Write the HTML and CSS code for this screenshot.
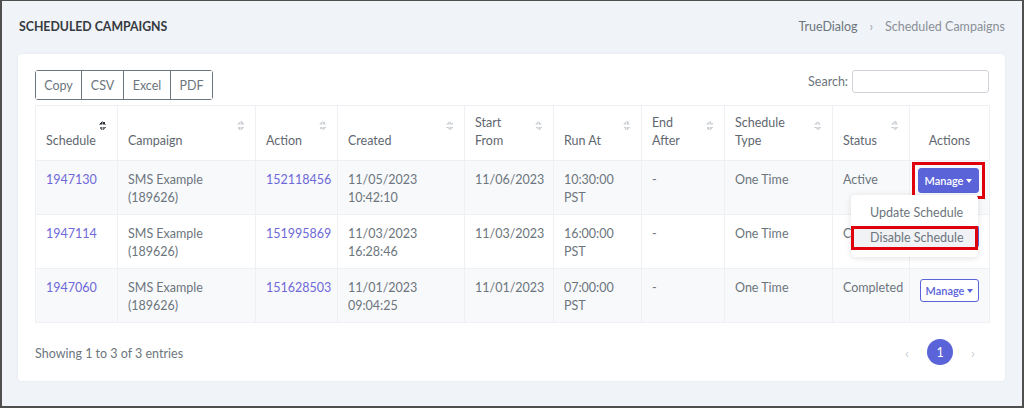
FILE: index.html
```html
<!DOCTYPE html>
<html>
<head>
<meta charset="utf-8">
<link rel="stylesheet" href="styles.css">
</head>
<body>
<div class="frame">
  <div class="page-head">
    <h1 class="title">SCHEDULED CAMPAIGNS</h1>
    <div class="crumbs"><span class="crumb">TrueDialog</span><span class="sep">›</span><span class="crumb">Scheduled Campaigns</span></div>
  </div>
  <div class="card">
    <div class="toolbar">
      <div class="btn-group">
        <button class="tb-btn b-copy">Copy</button><button class="tb-btn b-csv">CSV</button><button class="tb-btn b-excel">Excel</button><button class="tb-btn b-pdf">PDF</button>
      </div>
      <label class="search">Search: <input class="search-input" type="text"></label>
    </div>
    <table class="grid">
      <colgroup>
        <col class="c1"><col class="c2"><col class="c3"><col class="c4"><col class="c5"><col class="c6"><col class="c7"><col class="c8"><col class="c9"><col class="c10">
      </colgroup>
      <thead>
        <tr>
          <th class="sort sorted">Schedule</th>
          <th class="sort">Campaign</th>
          <th class="sort">Action</th>
          <th class="sort">Created</th>
          <th class="sort">Start<br>From</th>
          <th class="sort">Run At</th>
          <th class="sort">End<br>After</th>
          <th class="sort">Schedule<br>Type</th>
          <th class="sort">Status</th>
          <th class="center">Actions</th>
        </tr>
      </thead>
      <tbody>
        <tr class="odd">
          <td><a class="link">1947130</a></td>
          <td>SMS Example<br>(189626)</td>
          <td><a class="link">152118456</a></td>
          <td>11/05/2023<br>10:42:10</td>
          <td>11/06/2023</td>
          <td>10:30:00<br>PST</td>
          <td>-</td>
          <td>One Time</td>
          <td>Active</td>
          <td class="center act-cell">
            <span class="hl-box"><button class="manage filled">Manage<span class="caret"></span></button></span>
            <div class="menu">
              <div class="menu-item">Update Schedule</div>
              <div class="menu-item hover hl-item">Disable Schedule</div>
            </div>
          </td>
        </tr>
        <tr>
          <td><a class="link">1947114</a></td>
          <td>SMS Example<br>(189626)</td>
          <td><a class="link">151995869</a></td>
          <td>11/03/2023<br>16:28:46</td>
          <td>11/03/2023</td>
          <td>16:00:00<br>PST</td>
          <td>-</td>
          <td>One Time</td>
          <td>Completed</td>
          <td class="center"><button class="manage outline">Manage<span class="caret"></span></button></td>
        </tr>
        <tr class="odd">
          <td><a class="link">1947060</a></td>
          <td>SMS Example<br>(189626)</td>
          <td><a class="link">151628503</a></td>
          <td>11/01/2023<br>09:04:25</td>
          <td>11/01/2023</td>
          <td>07:00:00<br>PST</td>
          <td>-</td>
          <td>One Time</td>
          <td>Completed</td>
          <td class="center"><button class="manage outline">Manage<span class="caret"></span></button></td>
        </tr>
      </tbody>
    </table>
    <div class="footer">
      <div class="info">Showing 1 to 3 of 3 entries</div>
      <div class="pager">
        <span class="pg-arrow">‹</span>
        <span class="pg-num">1</span>
        <span class="pg-arrow">›</span>
      </div>
    </div>
  </div>
</div>
</body>
</html>
```

FILE: styles.css
```css
* { box-sizing: border-box; }
html, body { margin: 0; padding: 0; }
body {
  font-family: "Lato", "Noto Sans", sans-serif;
  font-size: 12.5px;
  color: #6c757d;
}
.frame {
  width: 1024px;
  height: 408px;
  border: 2px solid #4f4f4f;
  border-top-width: 1px;
  background: #f0f3f7;
  padding: 0 17px 0 16px;
}
.page-head {
  display: flex;
  justify-content: space-between;
  align-items: center;
  height: 50px;
  padding: 0 0 0 1px;
}
.title {
  margin: 0;
  font-size: 12.3px;
  font-weight: 700;
  color: #343a40;
}
.crumbs {
  display: flex;
  gap: 12px;
  font-size: 12.5px;
  color: #6c757d;
}
.crumbs .crumb:last-child { color: #8a9097; }
.sep { color: #9aa0a6; }
.card {
  margin-top: 3px;
  background: #fff;
  border-radius: 4px;
  box-shadow: 0 0 3px rgba(0,0,0,0.06);
  height: 327px;
  padding: 16px 16px 0 17px;
}
.toolbar {
  display: flex;
  justify-content: space-between;
  align-items: flex-start;
  height: 35px;
}
.btn-group {
  display: flex;
  border: 1px solid #6c757d;
  border-radius: 3px;
  height: 30px;
}
.tb-btn {
  font-family: inherit;
  font-size: 12.5px;
  color: #6c757d;
  background: #fff;
  border: 0;
  border-left: 1px solid #6c757d;
  padding: 0;
  height: 28px;
  text-align: center;
}
.tb-btn:first-child { border-left: 0; }
.b-copy { width: 45px; }
.b-csv { width: 42px; }
.b-excel { width: 47px; }
.b-pdf { width: 42px; }
.search {
  display: flex;
  align-items: center;
  gap: 4px;
  color: #6c757d;
}
.search-input {
  width: 137px;
  height: 23px;
  border: 1px solid #ced4da;
  border-radius: 3px;
}
.grid {
  width: 954px;
  border-collapse: collapse;
  table-layout: fixed;
}
.c1 { width: 82px; } .c2 { width: 138px; } .c3 { width: 82px; } .c4 { width: 127px; }
.c5 { width: 89px; } .c6 { width: 88px; } .c7 { width: 83px; } .c8 { width: 108px; }
.c9 { width: 77px; } .c10 { width: 80px; }
.grid th, .grid td {
  border: 1px solid #eef0f3;
  text-align: left;
  line-height: 18px;
}
.grid th {
  font-weight: 400;
  color: #5f6770;
  height: 55px;
  vertical-align: bottom;
  padding: 0 10px 10px 10px;
  position: relative;
}
.grid td {
  vertical-align: top;
  padding: 10px 10px 0 10px;
  height: 54px;
  color: #6c757d;
}
.grid tr.odd td { background: #f8f9fb; }
.grid .center { text-align: center; }
.sort::after {
  content: "";
  position: absolute;
  right: 11px;
  top: 15px;
  width: 7px;
  height: 9px;
  background:
    linear-gradient(to bottom right, transparent 50%, #ced2d6 50%) 0 0 / 3.5px 3.5px no-repeat,
    linear-gradient(to bottom left, transparent 50%, #ced2d6 50%) 3.5px 0 / 3.5px 3.5px no-repeat,
    linear-gradient(to top right, transparent 50%, #ced2d6 50%) 0 5.5px / 3.5px 3.5px no-repeat,
    linear-gradient(to top left, transparent 50%, #ced2d6 50%) 3.5px 5.5px / 3.5px 3.5px no-repeat;
}
.sorted::after {
  background:
    linear-gradient(to bottom right, transparent 50%, #2b2f33 50%) 0 0 / 3.5px 3.5px no-repeat,
    linear-gradient(to bottom left, transparent 50%, #2b2f33 50%) 3.5px 0 / 3.5px 3.5px no-repeat,
    linear-gradient(to top right, transparent 50%, #6c7177 50%) 0 5.5px / 3.5px 3.5px no-repeat,
    linear-gradient(to top left, transparent 50%, #6c7177 50%) 3.5px 5.5px / 3.5px 3.5px no-repeat;
}
.link { color: #6e68d8; text-decoration: none; }
.grid td.center { padding-left: 4px; padding-right: 4px; }
.grid td.act-cell { position: relative; padding-top: 1px; }
.hl-box {
  display: inline-block;
  vertical-align: top;
  border: 3px solid #e0000c;
  padding: 3px;
  line-height: 0;
  margin-left: -2px;
}
.manage {
  font-family: inherit;
  font-size: 11px;
  font-weight: 600;
  height: 23px;
  width: 59px;
  border-radius: 3px;
  display: inline-flex;
  align-items: center;
  justify-content: center;
  gap: 3px;
  padding: 0;
  vertical-align: top;
}
.manage.filled { background: #5a63d8; color: #fff; border: 1px solid #5a63d8; width: 61px; height: 25px; }
.manage.outline { background: #fff; color: #5a63d8; border: 1px solid #5a63d8; }
.caret {
  width: 0; height: 0;
  border-left: 3.5px solid transparent;
  border-right: 3.5px solid transparent;
  border-top: 4px solid currentColor;
}
.menu {
  position: absolute;
  top: 34px;
  right: 11px;
  width: 127px;
  background: #fff;
  border-radius: 4px;
  box-shadow: 0 1px 6px rgba(0,0,0,0.12);
  padding: 5px 0 7px;
  text-align: left;
  z-index: 2;
}
.menu-item {
  padding: 0 0 0 19px;
  height: 26px;
  line-height: 26px;
  color: #6c757d;
  font-size: 12.5px;
}
.menu-item.hover { background: #f1f2f5; }
.hl-item { border: 3px solid #e0000c; padding-left: 16px; height: 24px; line-height: 18px; }
.footer {
  display: flex;
  justify-content: space-between;
  align-items: center;
  height: 58px;
}
.info { color: #6c757d; font-size: 12.5px; margin-top: 2px; }
.pager {
  display: flex;
  align-items: center;
  gap: 18px;
  margin-right: 14px;
}
.pg-arrow { color: #c8ccd2; font-size: 14px; }
.pg-num {
  width: 26px;
  height: 26px;
  border-radius: 50%;
  background: #5a63d8;
  color: #fff;
  display: flex;
  align-items: center;
  justify-content: center;
  font-size: 12.5px;
}
```
